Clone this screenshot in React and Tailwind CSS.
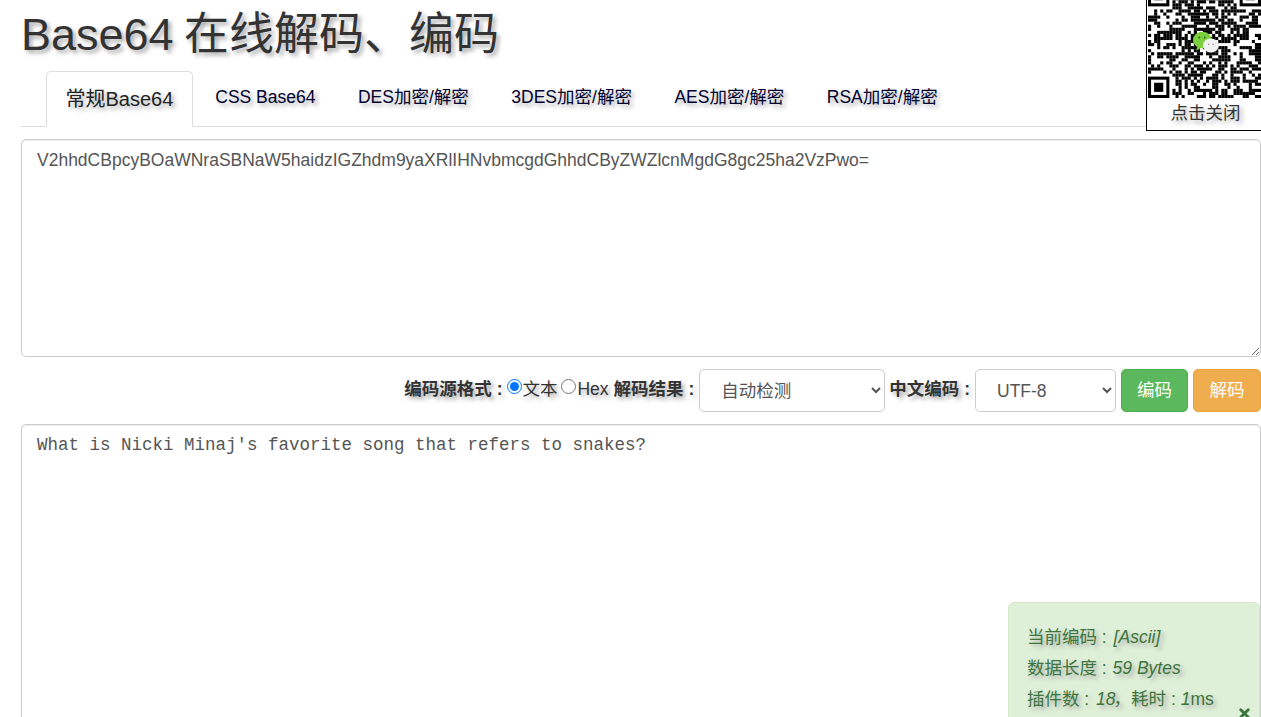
import { X } from 'lucide-react';

const FONT = '[font-family:"Liberation_Sans","Noto_Sans_CJK_SC",sans-serif]';

const TABS = ['CSS Base64', 'DES加密/解密', '3DES加密/解密', 'AES加密/解密', 'RSA加密/解密'];

const SIZE = 37;

function inFinder(x, y) {
  return (x < 8 && y < 8) || (x >= SIZE - 8 && y < 8) || (x < 8 && y >= SIZE - 8);
}

function buildModules() {
  const cells = [];
  let seed = 20240;
  for (let y = 0; y < SIZE; y++) {
    for (let x = 0; x < SIZE; x++) {
      seed = (seed * 1103515245 + 12345) & 0x7fffffff;
      if (inFinder(x, y)) continue;
      if ((seed >> 16) % 100 < 54) cells.push([x, y]);
    }
  }
  return cells;
}

const MODULES = buildModules();

function Finder({ x, y }) {
  return (
    <g>
      <rect x={x} y={y} width="7" height="7" fill="#000" />
      <rect x={x + 1} y={y + 1} width="5" height="5" fill="#fff" />
      <rect x={x + 2} y={y + 2} width="3" height="3" fill="#000" />
    </g>
  );
}

function QrCode() {
  return (
    <div className="h-[98px] w-[113px] overflow-hidden">
      <svg width="113" height="113" viewBox="0 0 37 37" className="-mt-[15px] block blur-[0.4px]">
        <rect width="37" height="37" fill="#fff" />
        {MODULES.map(([x, y]) => (
          <rect key={x + '-' + y} x={x} y={y} width="1.02" height="1.02" fill="#000" />
        ))}
        <Finder x={0} y={0} />
        <Finder x={30} y={0} />
        <Finder x={0} y={30} />
        <ellipse cx="17.8" cy="18" rx="3.1" ry="2.7" fill="#7bd13d" />
        <path d="M16.2 20l-.4 1.5 1.8-1z" fill="#7bd13d" />
        <circle cx="16.8" cy="17.2" r=".3" fill="#2c5a12" />
        <circle cx="18.6" cy="17.2" r=".3" fill="#2c5a12" />
        <ellipse cx="20.6" cy="19.8" rx="2.6" ry="2.3" fill="#f2f2f2" />
        <circle cx="19.9" cy="19.4" r=".25" fill="#888" />
        <circle cx="21.3" cy="19.4" r=".25" fill="#888" />
      </svg>
    </div>
  );
}

export default function App() {
  return (
    <div className={`relative h-[717px] overflow-hidden bg-white pl-[21px] text-[17.5px] leading-[25px] text-[#333] [text-shadow:3px_3px_4px_#aaa] ${FONT}`}>
      <h1 className="h-[71px] pt-[10px] text-[45px] leading-[50px] font-normal [word-spacing:-2px]">Base64 在线解码、编码</h1>

      <ul className="flex border-b border-[#ddd] pl-[25px]">
        <li className="-mb-px h-[56px] w-[147px] rounded-t-[5px] border border-[#ddd] border-b-white bg-white pt-[15px] pl-[18.5px] text-[20px] leading-[25px] text-[#222]">
          常规Base64
        </li>
        {TABS.map((tab) => (
          <li key={tab} className="ml-[2px] px-[20.25px] pt-[14px] text-[#00012f]">
            {tab}
          </li>
        ))}
      </ul>

      <textarea
        className="mt-[12px] block h-[218px] w-[1240px] rounded-[5px] border border-[#ccc] px-[15px] py-[8px] text-[#555] shadow-[inset_0_1px_1px_rgba(0,0,0,0.075)] outline-none"
        defaultValue="V2hhdCBpcyBOaWNraSBNaW5haidzIGZhdm9yaXRlIHNvbmcgdGhhdCByZWZlcnMgdG8gc25ha2VzPwo="
      />

      <div className="mt-[12px] flex h-[43px] items-center justify-end">
        <b className="-mt-[2px]">编码源格式 :</b>
        <input type="radio" name="source" defaultChecked className="ml-[5px] -mt-[9px] h-[15px] w-[15px]" />
        <span className="-mt-[2px]">文本</span>
        <input type="radio" name="source" className="mr-px ml-[4px] -mt-[9px] h-[15px] w-[15px]" />
        <span className="-mt-[2px]">Hex</span>
        <b className="mr-[5px] ml-[5px] -mt-[2px]">解码结果 :</b>
        <select className="h-[43px] w-[186px] rounded-[5px] border border-[#ccc] bg-white px-[17px] text-[#555]">
          <option>自动检测</option>
        </select>
        <b className="mr-[5px] ml-[4px] -mt-[2px]">中文编码 :</b>
        <select className="h-[43px] w-[141px] rounded-[5px] border border-[#ccc] bg-white px-[17px] text-[#555]">
          <option>UTF-8</option>
        </select>
        <button className="ml-[5px] h-[43px] w-[67px] rounded-[5px] border border-[#4cae4c] bg-[#5cb85c] text-white">编码</button>
        <button className="ml-[5px] h-[43px] w-[68px] rounded-[5px] border border-[#eea236] bg-[#f0ad4e] text-white">解码</button>
      </div>

      <textarea
        className="mt-[12px] block h-[400px] w-[1240px] rounded-[5px] border border-[#ccc] px-[15px] py-[8px] text-[#555] shadow-[inset_0_1px_1px_rgba(0,0,0,0.075)] outline-none [font-family:'Liberation_Mono',monospace]"
        defaultValue="What is Nicki Minaj's favorite song that refers to snakes?"
      />

      <div className="absolute top-0 right-0 h-[131px] w-[115px] border-b border-l border-black bg-white pl-px">
        <QrCode />
        <div className="pt-[3px] pl-[2px] text-center leading-[25px]">点击关闭</div>
      </div>

      <div className="absolute top-[602px] left-[1008px] h-[130px] w-[252px] rounded-[6px] border border-[#d6e9c6] bg-[#dff0d8] px-[18px] pt-[19px] leading-[31px] text-[#3c763d]">
        <div>当前编码 : <i className="ml-[2px]">[Ascii]</i></div>
        <div>数据长度 : <i className="ml-px">59 Bytes</i></div>
        <div>插件数 : <i className="mr-[-2px] ml-[2px]">18</i>，耗时 : <i>1</i>ms</div>
        <X size={15} strokeWidth={4.5} className="absolute top-[103px] left-[228px] text-[#3c763d]" />
      </div>
    </div>
  );
}
